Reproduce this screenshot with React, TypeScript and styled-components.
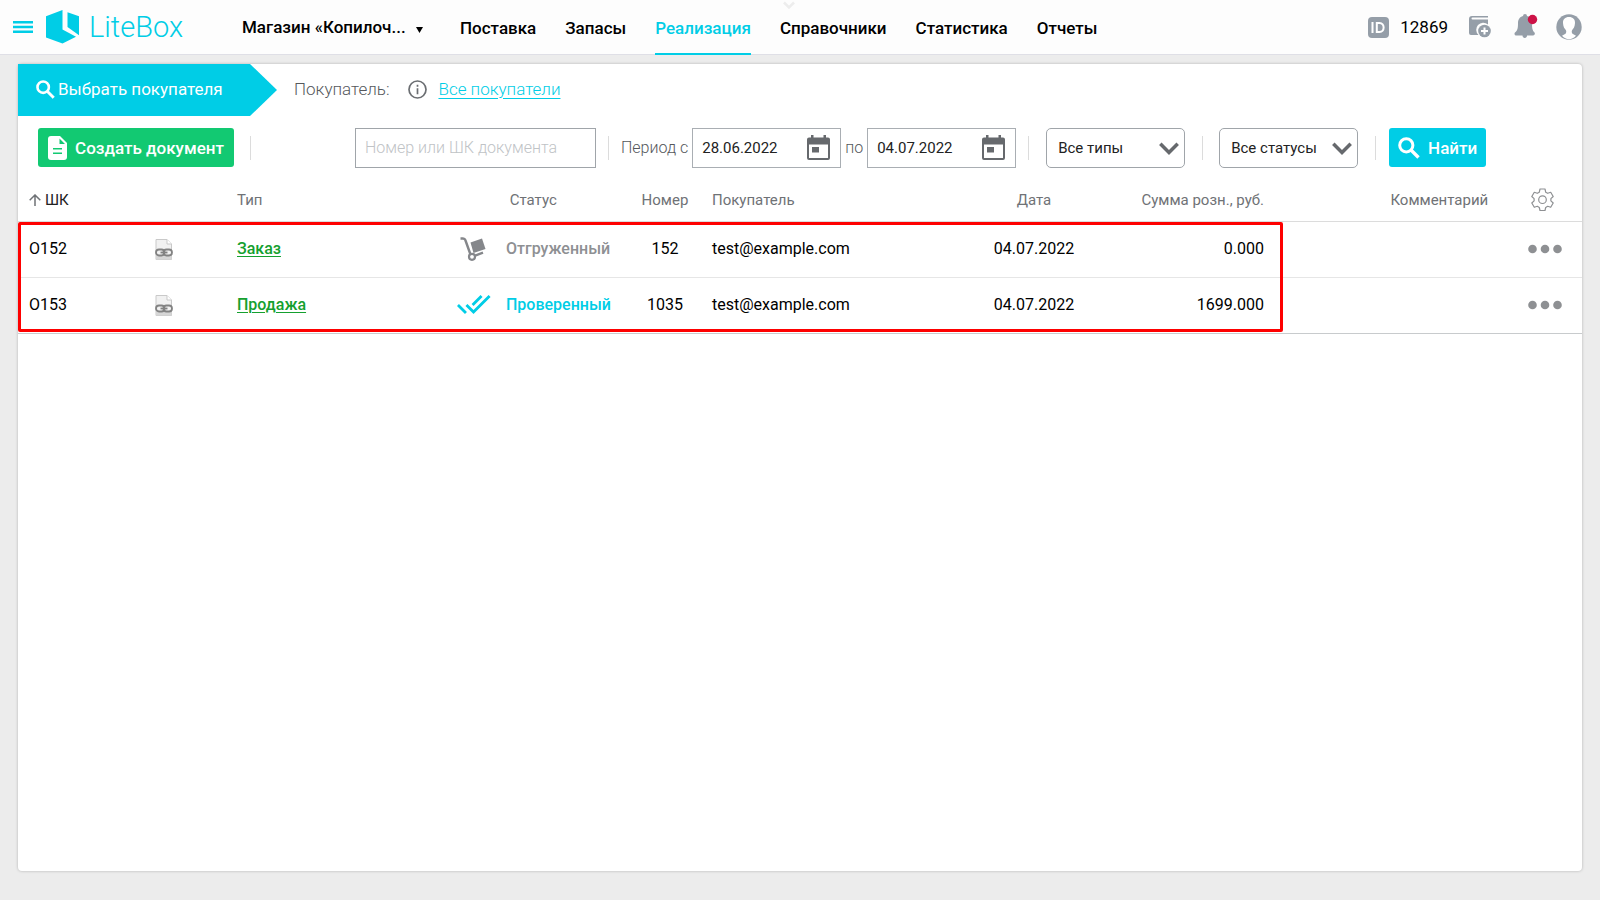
import React from 'react';
import styled, { createGlobalStyle } from 'styled-components';

const cyan = '#00cde6';

const GlobalStyle = createGlobalStyle`
  *, *::before, *::after { box-sizing: border-box; }
  body {
    margin: 0;
    background: #ececec;
    color: #000;
    font: 400 16px/20px Roboto, "Liberation Sans", sans-serif;
  }
  button, input, select { font-family: inherit; }
  button { cursor: pointer; }
`;

const Page = styled.div`
  display: flex;
  flex-direction: column;
  min-height: 100vh;
`;

const Header = styled.header`
  position: relative;
  display: flex;
  align-items: center;
  height: 55px;
  padding: 0 18px 0 13px;
  background: #fdfdfd;
  border-bottom: 1px solid #dfdfe6;
`;

const PlainButton = styled.button`
  display: flex;
  align-items: center;
  justify-content: center;
  padding: 0;
  border: 0;
  background: none;
  color: inherit;
`;

const Logo = styled.a`
  display: flex;
  align-items: center;
  gap: 10px;
  width: 196px;
  margin-left: 13px;
  color: ${cyan};
  font-size: 29px;
  font-weight: 300;
  line-height: 36px;
  text-decoration: none;
`;

const StoreButton = styled(PlainButton)`
  gap: 10px;
  width: 182px;
  justify-content: flex-start;
  font-size: 17px;
  font-weight: 500;
  line-height: 24px;
  white-space: nowrap;
  svg { margin-top: 5px; }
`;

const Nav = styled.nav`
  display: flex;
  flex: 1;
  align-self: stretch;
  gap: 29px;
  margin-left: 36px;
`;

const NavLink = styled.a<{ $active?: boolean }>`
  display: flex;
  align-items: center;
  height: 55px;
  padding-top: 3px;
  color: ${p => (p.$active ? cyan : '#000')};
  border-bottom: 2px solid ${p => (p.$active ? cyan : 'transparent')};
  font-size: 17px;
  font-weight: 500;
  text-decoration: none;
`;

const Tools = styled.div`
  display: flex;
  align-items: center;
  color: #959ea8;
`;

const Account = styled.span`
  margin: 0 21px 0 11px;
  color: #000;
  font-size: 17px;
`;

const Bell = styled(PlainButton)`
  margin: 0 18px 0 23px;
`;

const PullTab = styled(PlainButton)`
  position: absolute;
  top: 0;
  left: 50%;
  width: 14px;
  margin-left: -18px;
`;

const Panel = styled.main`
  flex: 1;
  margin: 9px 18px 29px 18px;
  background: #fff;
  border-radius: 4px;
  box-shadow: 0 0 3px rgba(0, 0, 0, 0.25);
`;

const BuyerBar = styled.div`
  display: flex;
  align-items: center;
  height: 52px;
  padding-bottom: 2px;
  color: #55585c;
  font-size: 17px;
  font-weight: 300;
`;

const ChooseBuyer = styled(PlainButton)`
  justify-content: flex-start;
  gap: 3px;
  align-self: flex-start;
  width: 259px;
  height: 52px;
  margin-right: 17px;
  padding: 0 0 2px 18px;
  background: ${cyan};
  clip-path: polygon(0 0, 232px 0, 100% 50%, 232px 100%, 0 100%);
  color: #fff;
  font-size: 17px;
`;

const Info = styled.span`
  display: flex;
  margin: 0 11px 0 19px;
`;

const BuyerLink = styled.a`
  color: ${cyan};
  text-underline-offset: 3px;
`;

const Toolbar = styled.form`
  display: flex;
  align-items: center;
  height: 63px;
  padding: 0 20px;
`;

const SolidButton = styled(PlainButton)<{ $color: string; $width: number }>`
  width: ${p => p.$width}px;
  height: 39px;
  border-radius: 3px;
  background: ${p => p.$color};
  color: #fff;
  gap: 8px;
  font-size: 17px;
  font-weight: 500;
  white-space: nowrap;
`;

const Divider = styled.span<{ $before: number; $after: number }>`
  width: 1px;
  height: 24px;
  margin: 0 ${p => p.$after}px 0 ${p => p.$before}px;
  background: #dcdcdc;
`;

const SearchInput = styled.input`
  width: 241px;
  height: 40px;
  padding: 0 9px;
  border: 1px solid #a0a5aa;
  font-size: 16px;
  font-weight: 300;
  &::placeholder { color: #c0c3c6; opacity: 1; }
`;

const PeriodLabel = styled.label`
  display: flex;
  align-items: center;
  gap: 4px;
  color: #55585c;
  font-size: 16px;
  font-weight: 300;
`;

const DateBox = styled.span`
  display: flex;
  align-items: center;
  width: 149px;
  height: 40px;
  margin-right: 4px;
  padding: 0 10px 0 9px;
  border: 1px solid #a9aeb3;
  color: #66696d;
`;

const DateInput = styled.input`
  flex: 1;
  min-width: 0;
  padding: 0;
  border: 0;
  outline: 0;
  background: none;
  color: #222;
  font-size: 15px;
`;

const SelectBox = styled.span`
  position: relative;
  width: 139px;
  color: #66696d;
  svg {
    position: absolute;
    top: 14px;
    right: 6px;
    pointer-events: none;
  }
`;

const Select = styled.select`
  display: block;
  width: 100%;
  height: 40px;
  padding: 0 30px 0 11px;
  appearance: none;
  border: 1px solid #a0a5aa;
  border-radius: 5px;
  background: #fff;
  color: #222;
  font-size: 15px;
`;

const TableArea = styled.div`
  position: relative;
`;

const Table = styled.table`
  width: 100%;
  table-layout: fixed;
  border-collapse: collapse;
`;

type Align = 'left' | 'center' | 'right';

const Head = styled.th<{ $align?: Align; $strong?: boolean }>`
  height: 42px;
  padding: 0 11px;
  border-bottom: 1px solid #dcdcdc;
  color: ${p => (p.$strong ? '#222' : '#6f7276')};
  font-size: 15px;
  font-weight: 400;
  text-align: ${p => p.$align ?? 'left'};
  white-space: nowrap;
`;

const Row = styled.tr`
  border-bottom: 1px solid #e6e6e6;
  &:last-child { border-bottom: 1px solid #c8cbcd; }
`;

const Cell = styled.td<{ $align?: Align }>`
  height: 56px;
  padding: 0 11px;
  text-align: ${p => p.$align ?? 'left'};
  white-space: nowrap;
  svg { vertical-align: middle; }
`;

const IconCell = styled(Cell)`
  padding: 0;
  text-align: center;
`;

const SortButton = styled(PlainButton)`
  gap: 4px;
  font-size: 15px;
`;

const CenterButton = styled(PlainButton)`
  width: 100%;
  color: #8e9093;
`;

const TypeLink = styled.a`
  color: #15a02f;
  font-weight: 500;
  text-underline-offset: 2px;
  text-decoration-thickness: 1px;
`;

const Status = styled.span<{ $color: string }>`
  color: ${p => p.$color};
  font-weight: 500;
`;

const Highlight = styled.div`
  position: absolute;
  top: 43px;
  bottom: 2px;
  left: 0;
  right: 299px;
  border: 3px solid #fe0000;
  border-radius: 2px;
  pointer-events: none;
`;

const MenuIcon = () => (
  <svg width="20" height="14" viewBox="0 0 20 14" fill={cyan}>
    <path d="M0 1h20v2.500H0zM0 5.700h20v2.500H0zM0 10.400h20v2.500H0z" />
  </svg>
);

const LogoMark = () => (
  <svg width="33" height="34" viewBox="0 0 33 34" fill={cyan}>
    <path d="M16.500 0v19.500L30 26.700 16.500 33.500 0 27.500V6.300z" />
    <path d="M21.500 2.200 33 6.300v19L21.500 17z" />
  </svg>
);

const SearchIcon = ({ size }: { size: number }) => (
  <svg width={size} height={size} viewBox="0 0 22 22" fill="none" stroke="currentColor" strokeWidth="3">
    <circle cx="8.300" cy="8.300" r="6.600" />
    <path d="m13 13 7.500 7.500" strokeWidth="3.400" />
  </svg>
);

const IdIcon = () => (
  <svg width="21" height="21" viewBox="0 0 21 21">
    <rect width="21" height="21" rx="4" fill="currentColor" />
    <path d="M4.500 5v11M8.800 6h2.700c5.500 0 5.500 9 0 9H8.800z" fill="none" stroke="#fff" strokeWidth="2" />
  </svg>
);

const BoxAddIcon = () => (
  <svg width="22" height="22" viewBox="0 0 22 22" fill="currentColor">
    <path d="M3 0h16v1.500H3.500a1 1 0 0 0 0 2H19V8.500a7 7 0 0 0-9.500 10.500H2a2 2 0 0 1-2-2V3a3 3 0 0 1 3-3z" />
    <circle cx="15.500" cy="15" r="6.300" />
    <path d="M15.500 11.500v7M12 15h7" stroke="#fff" strokeWidth="2" />
  </svg>
);

const BellIcon = () => (
  <svg width="24" height="26" viewBox="0 0 24 26">
    <path d="M9 2a2 2 0 0 1 4 0c3.500 1 5 4 5 7 0 5.500.5 7.500 2.500 9.500.8 1 .3 3-1.500 3h-6a2.200 2.200 0 0 1-4 1.500c-.5-.5-.5-1-.5-1.500H2.500C.5 21.500 0 19.500 1 18.500c2.500-2 3-4 3-9.500 0-3 1.500-6 5-7z" fill="currentColor" />
    <circle cx="18.500" cy="5.500" r="4.700" fill="#cd1247" />
  </svg>
);

const AvatarIcon = () => (
  <svg width="26" height="26" viewBox="0 0 26 26">
    <circle cx="13" cy="13" r="12.700" fill="currentColor" />
    <path d="M13 3c-4 0-6.200 2.500-6 6 .2 4 1.500 5.500 2.800 7 .8 1 .5 3-.3 3.700L6 21.800C8 24 10.500 25.200 13 25.200s5-1.200 7-3.400l-3.500-2.100c-.8-.7-1.100-2.700-.3-3.700 1.300-1.500 2.600-3 2.800-7 .2-3.500-2-6-6-6z" fill="#fff" />
  </svg>
);

const InfoIcon = () => (
  <svg width="19" height="19" viewBox="0 0 19 19" fill="none" stroke="#6b6e72" strokeWidth="1.700">
    <circle cx="9.500" cy="9.500" r="8.500" />
    <path d="M9.500 4.700v2M9.500 8.200v6" />
  </svg>
);

const DocumentIcon = () => (
  <svg width="19" height="24" viewBox="0 0 19 24">
    <path d="M3 0h9l7 7v14a3 3 0 0 1-3 3H3a3 3 0 0 1-3-3V3a3 3 0 0 1 3-3z" fill="#fff" />
    <path d="M11.500 2.500v5.500H17zM5 12h9v1.500H5zM5 16.500h9V18H5z" fill="#12c972" />
  </svg>
);

const CalendarIcon = () => (
  <svg width="23" height="25" viewBox="0 0 23 25">
    <path d="M4 0h2.500v2.500h10V0H19v2.500h2A2 2 0 0 1 23 4.500V23a2 2 0 0 1-2 2H2a2 2 0 0 1-2-2V4.500a2 2 0 0 1 2-2h2zM2 9.500V23h19V9.500z" fill="currentColor" fillRule="evenodd" />
    <path d="M5 12h7v5.500H5z" fill="currentColor" />
  </svg>
);

const ChevronIcon = () => (
  <svg width="20" height="14" viewBox="0 0 20 14" fill="none" stroke="currentColor" strokeWidth="3.500">
    <path d="m1.300 1.800 8.700 8.800 8.700-8.800" />
  </svg>
);

const GearIcon = () => (
  <svg width="23" height="23" viewBox="0 0 23 23" fill="none" stroke="#8e9093" strokeWidth="1.200" strokeLinejoin="round">
    <path d="M9 1h5l.7 3.200 2 1.100 3-1 2.500 4.200-2.300 2.100v2.300l2.300 2.100-2.500 4.300-3-1-2 1.200L14 22.500H9l-.7-3-2-1.200-3 1L.8 15l2.300-2.100v-2.300L.8 8.500l2.500-4.200 3 1 2-1.100z" />
    <circle cx="11.500" cy="11.700" r="3.800" />
  </svg>
);

const LinkedFileIcon = () => (
  <svg width="18" height="21" viewBox="0 0 18 21">
    <path d="M1 .5h11l4.500 4.500v15.500H1z" fill="#f1f1f1" stroke="#c9c9c9" />
    <path d="M12 .5V5h4.500" fill="#fff" stroke="#c9c9c9" />
    <path d="M1 17h15.500v3.500H1z" fill="#d6d6d6" />
    <g fill="none" stroke="#828282" strokeWidth="1.800">
      <rect x="1" y="10.500" width="8.500" height="6" rx="3" />
      <rect x="8.500" y="10.500" width="8.500" height="6" rx="3" />
      <path d="M5.500 13.500h7" />
    </g>
  </svg>
);

const TrolleyIcon = () => (
  <svg width="29" height="24" viewBox="0 0 29 24">
    <path d="M.5 1.500 3 1.500c2 0 2 .5 2.500 2l5 14M14.500 18.800l8.500-3.200" fill="none" stroke="#85878b" strokeWidth="2.400" />
    <path d="m10.500 5.500 11.500-4 3.500 10.500-12 4z" fill="#85878b" />
    <circle cx="12" cy="19.800" r="3" fill="#fff" stroke="#85878b" strokeWidth="2.200" />
  </svg>
);

const DoubleCheckIcon = () => (
  <svg width="34" height="20" viewBox="0 0 36 21" fill="none" stroke={cyan} strokeWidth="3">
    <path d="m1 10.500 8.500 8.500M10 10.500l7.500 7.500L34.500 1M16.500 10.500l9.500-9.500" />
  </svg>
);

const DotsIcon = () => (
  <svg width="38" height="10" viewBox="-4 0 38 10" fill="#8e9093">
    <circle cx="4.500" cy="5" r="4.300" />
    <circle cx="17" cy="5" r="4.300" />
    <circle cx="29.500" cy="5" r="4.300" />
  </svg>
);

const navItems = ['Поставка', 'Запасы', 'Реализация', 'Справочники', 'Статистика', 'Отчеты'];

const columnWidths = [84, 124, 227, 42, 134, 72, undefined, 130, 176, 228, 79];

const documents = [
  {
    code: 'O152', type: 'Заказ', status: 'Отгруженный', statusColor: '#8e9093', icon: <TrolleyIcon />,
    number: '152', buyer: 'test@example.com', date: '04.07.2022', sum: '0.000',
  },
  {
    code: 'O153', type: 'Продажа', status: 'Проверенный', statusColor: cyan, icon: <DoubleCheckIcon />,
    number: '1035', buyer: 'test@example.com', date: '04.07.2022', sum: '1699.000',
  },
];

const DateField = ({ label, value }: { label: string; value: string }) => (
  <PeriodLabel>
    {label}
    <DateBox>
      <DateInput type="text" defaultValue={value} />
      <CalendarIcon />
    </DateBox>
  </PeriodLabel>
);

const SelectField = ({ label, option }: { label: string; option: string }) => (
  <SelectBox>
    <Select aria-label={label}>
      <option>{option}</option>
    </Select>
    <ChevronIcon />
  </SelectBox>
);

export default function App() {
  return (
    <Page>
      <GlobalStyle />
      <Header>
        <PlainButton aria-label="Меню"><MenuIcon /></PlainButton>
        <Logo href="#"><LogoMark />LiteBox</Logo>
        <StoreButton>
          Магазин «Копилоч...
          <svg width="7" height="6" viewBox="0 0 7 6"><path d="M0 0h7L3.500 6z" /></svg>
        </StoreButton>
        <Nav>
          {navItems.map(item => (
            <NavLink key={item} href="#" $active={item === 'Реализация'}>{item}</NavLink>
          ))}
        </Nav>
        <Tools>
          <IdIcon />
          <Account>12869</Account>
          <PlainButton aria-label="Добавить"><BoxAddIcon /></PlainButton>
          <Bell aria-label="Уведомления"><BellIcon /></Bell>
          <PlainButton aria-label="Профиль"><AvatarIcon /></PlainButton>
        </Tools>
        <PullTab aria-label="Развернуть">
          <svg width="14" height="10" viewBox="0 0 14 10" fill="none" stroke="#ededed" strokeWidth="2.500">
            <path d="m2 2.500 5 5 5-5" />
          </svg>
        </PullTab>
      </Header>

      <Panel>
        <BuyerBar>
          <ChooseBuyer><SearchIcon size={19} />Выбрать покупателя</ChooseBuyer>
          Покупатель:
          <Info><InfoIcon /></Info>
          <BuyerLink href="#">Все покупатели</BuyerLink>
        </BuyerBar>

        <Toolbar onSubmit={e => e.preventDefault()}>
          <SolidButton type="button" $color="#12c972" $width={196}>
            <DocumentIcon />Создать документ
          </SolidButton>
          <Divider $before={16} $after={104} />
          <SearchInput type="text" aria-label="Номер или ШК документа" placeholder="Номер или ШК документа" />
          <Divider $before={12} $after={12} />
          <DateField label="Период с" value="28.06.2022" />
          <DateField label="по" value="04.07.2022" />
          <Divider $before={8} $after={17} />
          <SelectField label="Тип" option="Все типы" />
          <Divider $before={17} $after={16} />
          <SelectField label="Статус" option="Все статусы" />
          <Divider $before={17} $after={13} />
          <SolidButton type="submit" $color={cyan} $width={97}><SearchIcon size={22} />Найти</SolidButton>
        </Toolbar>

        <TableArea>
          <Table>
            <colgroup>
              {columnWidths.map((width, i) => <col key={i} width={width} />)}
            </colgroup>
            <thead>
              <tr>
                <Head $strong>
                  <SortButton>
                    <svg width="12" height="12" viewBox="0 0 12 12" fill="none" stroke="#6f7276" strokeWidth="1.500">
                      <path d="M6 12V1M.7 6.300 6 1l5.300 5.300" />
                    </svg>
                    ШК
                  </SortButton>
                </Head>
                <Head />
                <Head>Тип</Head>
                <Head />
                <Head>&nbsp;Статус</Head>
                <Head $align="center">Номер</Head>
                <Head>Покупатель</Head>
                <Head $align="center">Дата</Head>
                <Head $align="right">Сумма розн., руб.</Head>
                <Head $align="right">Комментарий&nbsp;</Head>
                <Head><CenterButton aria-label="Настройки"><GearIcon /></CenterButton></Head>
              </tr>
            </thead>
            <tbody>
              {documents.map(doc => (
                <Row key={doc.code}>
                  <Cell>{doc.code}</Cell>
                  <IconCell><LinkedFileIcon /></IconCell>
                  <Cell><TypeLink href="#">{doc.type}</TypeLink></Cell>
                  <IconCell>{doc.icon}</IconCell>
                  <Cell><Status $color={doc.statusColor}>{doc.status}</Status></Cell>
                  <Cell $align="center">{doc.number}</Cell>
                  <Cell>{doc.buyer}</Cell>
                  <Cell $align="center">{doc.date}</Cell>
                  <Cell $align="right">{doc.sum}</Cell>
                  <Cell />
                  <Cell><CenterButton aria-label="Действия"><DotsIcon /></CenterButton></Cell>
                </Row>
              ))}
            </tbody>
          </Table>
          <Highlight />
        </TableArea>
      </Panel>
    </Page>
  );
}
